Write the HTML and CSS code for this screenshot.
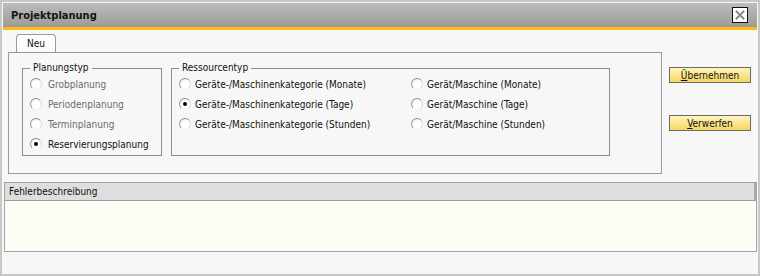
FILE: index.html
```html
<!DOCTYPE html>
<html>

<head>
    <title>Projektplanung</title>
    <meta name="viewport" content="width=device-width, initial-scale=1">
    <link rel="stylesheet" href="styles.css">
</head>

<body>
    <div class="window">
        <div class="titlebar">
            <span class="title">Projektplanung</span>
            <button class="close-button" title="Schließen">
                <svg width="10" height="10" viewBox="0 0 10 10">
                    <path d="M1.5 1.5 L8.5 8.5 M8.5 1.5 L1.5 8.5" stroke="#8a8a8a" stroke-width="2" stroke-linecap="square" fill="none"/>
                </svg>
            </button>
        </div>

        <div class="main-row">
            <div class="tabs">
                <div class="tab-strip">
                    <span class="tab active">Neu</span>
                </div>
                <div class="tab-panel">
                    <fieldset class="group group-plan">
                        <legend>Planungstyp</legend>
                        <label class="radio disabled"><span class="radio-dot"></span>Grobplanung</label>
                        <label class="radio disabled"><span class="radio-dot"></span>Periodenplanung</label>
                        <label class="radio disabled"><span class="radio-dot"></span>Terminplanung</label>
                        <label class="radio checked"><span class="radio-dot"></span>Reservierungsplanung</label>
                    </fieldset>
                    <fieldset class="group group-res">
                        <legend>Ressourcentyp</legend>
                        <div class="radio-grid">
                            <label class="radio"><span class="radio-dot"></span>Geräte-/Maschinenkategorie (Monate)</label>
                            <label class="radio"><span class="radio-dot"></span>Gerät/Maschine (Monate)</label>
                            <label class="radio checked"><span class="radio-dot"></span>Geräte-/Maschinenkategorie (Tage)</label>
                            <label class="radio"><span class="radio-dot"></span>Gerät/Maschine (Tage)</label>
                            <label class="radio"><span class="radio-dot"></span>Geräte-/Maschinenkategorie (Stunden)</label>
                            <label class="radio"><span class="radio-dot"></span>Gerät/Maschine (Stunden)</label>
                        </div>
                    </fieldset>
                </div>
            </div>
            <div class="actions">
                <button class="action-button"><u>Ü</u>bernehmen</button>
                <button class="action-button"><u>V</u>erwerfen</button>
            </div>
        </div>

        <div class="error-box">
            <div class="error-head">Fehlerbeschreibung</div>
            <div class="error-body"></div>
        </div>
    </div>
</body>

</html>
```

FILE: styles.css
```css
body {
    font-family: "DejaVu Sans Condensed", "Liberation Sans", sans-serif;
    font-size: 10px;
    margin: 0;
    padding: 0;
    color: #000;
}

.window {
    width: 760px;
    height: 276px;
    box-sizing: border-box;
    border: 2px solid #c8c8c8;
    background-color: #f7f7f7;
}

.titlebar {
    display: flex;
    align-items: center;
    justify-content: space-between;
    height: 24px;
    margin: 1px 1px 0 1px;
    padding: 0 9px 0 8px;
    background: linear-gradient(#bcbcbc, #9b9b97);
    border-bottom: 3px solid #fcbc12;
}

.title {
    font-weight: bold;
    font-size: 11px;
    color: #141414;
}

.close-button {
    width: 16px;
    height: 16px;
    padding: 0;
    display: flex;
    align-items: center;
    justify-content: center;
    background-color: #fff;
    border: 1px solid #111;
    cursor: pointer;
}

.main-row {
    display: flex;
    padding: 4px 0 0 6px;
}

.tab-strip {
    display: flex;
    padding-left: 8px;
}

.tab {
    height: 17px;
    line-height: 17px;
    width: 38px;
    text-align: center;
    border: 1px solid #9a9a9a;
    border-bottom: none;
    border-radius: 4px 4px 0 0;
    background: linear-gradient(#ffffff, #f9f9f9);
    color: #111;
}

.tab-panel {
    display: flex;
    width: 654px;
    height: 122px;
    box-sizing: border-box;
    padding: 9px 0 0 13px;
    border: 1px solid #9a9a9a;
}

.group {
    margin: 0;
    padding: 0 0 1px 7px;
    border: 1px solid #8e8e8e;
    height: 94px;
    box-sizing: border-box;
}

.group legend {
    padding: 0 3px;
    line-height: 12px;
    color: #111;
}

.group-plan {
    width: 140px;
}

.group-res {
    width: 439px;
    margin-left: 9px;
}

.radio-grid {
    display: grid;
    grid-template-columns: 232px 1fr;
}

.radio {
    display: flex;
    align-items: center;
    gap: 4px;
    height: 20px;
    color: #111;
}

.group-plan .radio {
    gap: 6px;
}

.radio.disabled {
    color: #6c6c6c;
}

.radio-dot {
    width: 10px;
    height: 10px;
    border-radius: 50%;
    border: 1px solid;
    border-color: #8c8c8c #d8d8d8 #f2f2f2 #9a9a9a;
    background: radial-gradient(circle at 60% 60%, #ffffff 45%, #e6e6e6 100%);
    display: flex;
    align-items: center;
    justify-content: center;
    flex-shrink: 0;
}

.radio.checked .radio-dot::after {
    content: "";
    width: 4px;
    height: 4px;
    border-radius: 50%;
    background-color: #000;
}

.actions {
    display: flex;
    flex-direction: column;
    gap: 32px;
    margin: 33px 0 0 7px;
}

.action-button {
    width: 82px;
    height: 16px;
    padding: 0;
    font-family: inherit;
    font-size: 10px;
    color: #111;
    border: 1px solid #6a6a6a;
    background: linear-gradient(#fff4bc, #f5d760);
    cursor: pointer;
}

.error-box {
    margin: 8px 1px 0 2px;
    border: 1px solid #a3a3a3;
}

.error-head {
    height: 17px;
    line-height: 17px;
    padding-left: 4px;
    background-color: #dedede;
    border-bottom: 1px solid #9c9c9c;
    border-right: 2px solid #a8a8a8;
    color: #111;
}

.error-body {
    height: 50px;
    background-color: #fdfdf5;
}
```
